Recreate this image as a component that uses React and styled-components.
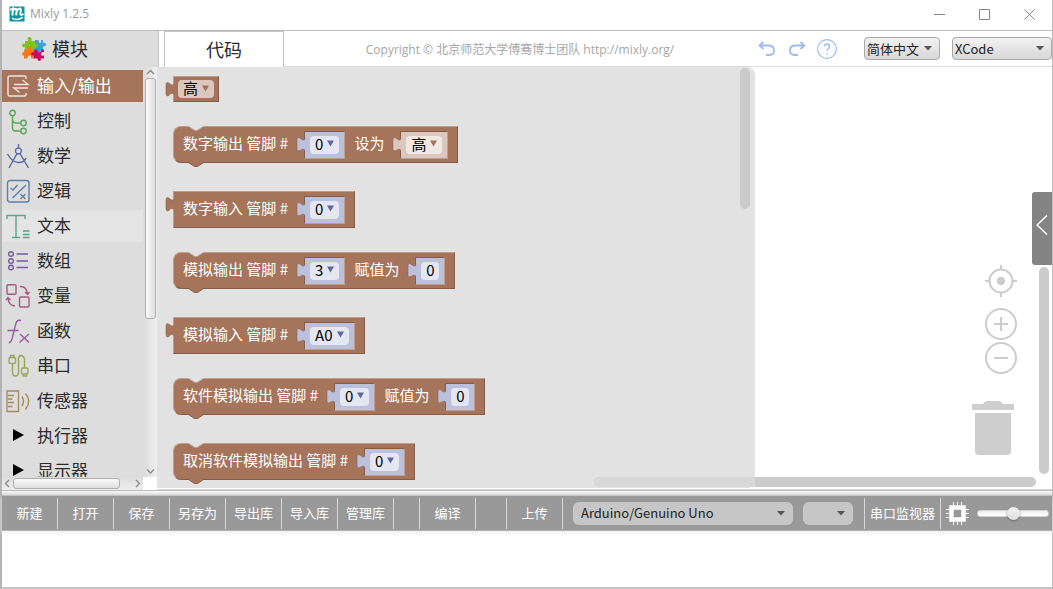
import React from "react";
import styled, { createGlobalStyle, css } from "styled-components";

const cjk = '"Noto Sans CJK SC", sans-serif';
const ui = '"Open Sans", "Noto Sans CJK SC", sans-serif';

const Global = createGlobalStyle`
  * { box-sizing: border-box; }
  body { margin: 0; background: #fff; font-family: ${cjk}; color: #2b2b2b; }
  button, input, select { font: inherit; color: inherit; margin: 0; padding: 0; border: 0; background: none; }
  svg { display: block; }
`;

const Window = styled.div`
  display: flex;
  flex-direction: column;
  height: 100vh;
  border-left: 2px solid #b4b4b4;
  border-right: 1px solid #bcbcbc;
  border-bottom: 2px solid #c4c4c4;
`;

/* ---------- title bar and header ---------- */

const TitleBar = styled.header`
  display: flex;
  align-items: center;
  flex: 0 0 31px;
  padding: 0 0 2px 7px;
  gap: 5px;
  border-bottom: 1px solid #bdbdbd;
`;

const Title = styled.span`
  flex: 1;
  font: 12px/28px ${ui};
  color: #999;
`;

const WindowButton = styled.button`
  display: flex;
  align-items: center;
  justify-content: center;
  width: 45px;
  height: 28px;
  margin-left: -5px;
`;

const Header = styled.div`
  display: flex;
  align-items: stretch;
  flex: 0 0 36px;
`;

const HeaderTab = styled.button`
  display: flex;
  align-items: center;
  justify-content: ${(p) => (p.$code ? "center" : "flex-start")};
  gap: 6px;
  flex: 0 0 ${(p) => (p.$code ? 120 : 157)}px;
  margin-right: ${(p) => (p.$code ? 0 : 5)}px;
  padding-left: ${(p) => (p.$code ? 0 : 20)}px;
  border: solid #c4c4c4;
  border-width: ${(p) => (p.$code ? "1px 1px 0" : "0 1px 0 0")};
  background: ${(p) => (p.$code ? "#fff" : "#ddd")};
  font-size: 18px;
  line-height: 28px;
`;

const Label = styled.span`
  padding-bottom: 2px;
`;

const HeaderTools = styled.div`
  display: flex;
  align-items: center;
  flex: 1;
  border-bottom: 1px solid #ddd;
`;

const Copyright = styled.p`
  flex: 1;
  margin: 0;
  padding: 2px 0 0 4px;
  text-align: center;
  white-space: nowrap;
  font: 12px/32px ${ui};
  color: #a6a6a6;
`;

const ToolButton = styled.button`
  display: flex;
  align-items: center;
  justify-content: center;
  width: 30px;
  height: 30px;
`;

const SelectBox = styled.div`
  position: relative;
  flex: 0 0 ${(p) => p.$w}px;
  margin-left: ${(p) => p.$gap}px;
  height: 23px;
  color: #222;

  select {
    display: block;
    appearance: none;
    width: 100%;
    height: 100%;
    padding-left: ${(p) => (p.$dark ? 8 : 2)}px;
    border: ${(p) => (p.$dark ? "0" : "1px solid #a9a9a9")};
    border-radius: ${(p) => (p.$dark ? 6 : 4)}px;
    background: ${(p) => (p.$dark ? "#c6c6c6" : "linear-gradient(#f2f2f2, #d8d8d8)")};
    font: 13px/20px ${cjk};
  }
  svg {
    position: absolute;
    right: 8px;
    top: 9px;
    pointer-events: none;
  }
`;

/* ---------- sidebar ---------- */

const Workspace = styled.main`
  display: flex;
  flex: 1;
  min-height: 0;
`;

const Sidebar = styled.aside`
  display: grid;
  grid-template: minmax(0, 1fr) 13px / 141px 14px;
  background: #ddd;
`;

const CategoryList = styled.nav`
  display: flex;
  flex-direction: column;
  gap: 3px;
  padding-top: 3px;
  overflow: hidden;
`;

const CategoryButton = styled.button`
  display: flex;
  align-items: center;
  flex: 0 0 32px;
  padding-left: 4px;
  gap: 7px;
  font-size: 17px;
  line-height: 28px;
  white-space: nowrap;
  ${(p) => p.$state === "selected" && css`background: #a5745b; color: #fff;`}
  ${(p) => p.$state === "hover" && css`background: #e4e4e4;`}
`;

const ScrollTrack = styled.div`
  display: flex;
  flex-direction: ${(p) => (p.$row ? "row" : "column")};
  align-items: center;
  gap: 1px;
  padding: ${(p) => (p.$row ? "0 1px" : "1px 0")};
  background: linear-gradient(${(p) => (p.$row ? "180deg" : "90deg")}, #dcdcdc, #efefef);
`;

const ScrollThumb = styled.div`
  flex: 0 0 ${(p) => p.$size};
  margin-${(p) => (p.$row ? "right" : "bottom")}: auto;
  ${(p) => (p.$row ? "height" : "width")}: 11px;
  border: 1px solid #b0b0b0;
  border-radius: 3px;
  background: linear-gradient(${(p) => (p.$row ? "180deg" : "90deg")}, #fafafa, #dedede);
`;

const Corner = styled.div`
  background: #fff;
`;

/* ---------- block canvas ---------- */

const Canvas = styled.section`
  position: relative;
  display: flex;
  flex: 1;
  min-width: 0;
  padding-bottom: 1px;
  border-bottom: 1px solid #d4d4d4;
`;

const Flyout = styled.div`
  display: flex;
  flex: 0 0 calc(67% - 2px);
  justify-content: space-between;
  padding: 1px 5px 0 16px;
  border-radius: 0 8px 8px 0;
  background: #e2e2e2;
  overflow: hidden;
`;

const BlockList = styled.div`
  display: flex;
  flex-direction: column;
  align-items: flex-start;
  gap: 24px;
  padding-top: 8px;
`;

const Block = styled.div`
  position: relative;
  display: flex;
  align-items: center;
  flex: 0 0 ${(p) => (p.$small ? 26 : 37)}px;
  margin-bottom: ${(p) => (p.$statement ? 4 : 0)}px;
  padding: 0 ${(p) => (p.$small ? 4 : 9)}px;
  border: 1px solid;
  border-color: #c09e8c #845d49 #845d49 #c09e8c;
  border-radius: ${(p) => (p.$statement ? "8px 0 0 8px" : "0")};
  background: #a5745b;
`;

const BlockText = styled.span`
  padding-bottom: 3px;
  font-size: 15px;
  line-height: 24px;
  color: #fff;
  white-space: nowrap;

  ${Block} > div + & {
    margin-left: 9px;
  }
`;

const Socket = styled.div`
  position: relative;
  display: flex;
  align-items: center;
  height: 28px;
  margin-left: 16px;
  padding: 0 5px;
  border: 1px solid;
  border-color: #845d49 #c09e8c #c09e8c #845d49;
  background: ${(p) => (p.$brown ? "#dbc7bd" : "#bbc1dc")};
`;

const fieldStyle = css`
  height: 18px;
  padding-bottom: 2px;
  border-radius: 4px;
  font-size: 15px;
  line-height: 16px;
  color: #000;
`;

const FieldButton = styled.button`
  display: flex;
  align-items: center;
  gap: 4px;
  padding: 0 5px;
  background: ${(p) => p.$bg};
  ${fieldStyle}
`;

const FieldInput = styled.input`
  width: 18px;
  text-align: center;
  background: #e4e6f1;
  ${fieldStyle}
`;

const Tab = styled.svg`
  position: absolute;
  left: -9px;
  top: 4px;
`;

const Notch = styled.svg`
  position: absolute;
  left: 14px;
  ${(p) => (p.$bottom ? "bottom: -5px;" : "top: -1px;")}
`;

const Bar = styled.div`
  border-radius: 5px;
  background: #cbcbcb;
`;

const FlyoutBar = styled(Bar)`
  width: 10px;
  height: 141px;
`;

const CanvasBarV = styled(Bar)`
  position: absolute;
  right: 3px;
  top: 200px;
  bottom: 15px;
  width: 10px;
`;

const CanvasBarH = styled(Bar)`
  position: absolute;
  right: 16px;
  bottom: 2px;
  width: 442px;
  height: 10px;
`;

const FlyoutLayer = styled(Bar)`
  position: absolute;
  left: 437px;
  right: calc(33% + 2px);
  bottom: 2px;
  height: 10px;
  border-radius: 5px 0 0 5px;
  background: #d8d8d8;
`;

const CanvasControls = styled.div`
  position: absolute;
  right: 35px;
  bottom: 34px;
  display: flex;
  flex-direction: column;
  align-items: flex-end;
`;

const ControlButton = styled.button`
  margin-bottom: ${(p) => p.$after}px;
`;

const Trash = styled.svg`
  margin-right: 3px;
`;

const PanelHandle = styled.button`
  position: absolute;
  right: 0;
  top: 125px;
  display: flex;
  align-items: center;
  justify-content: center;
  width: 20px;
  height: 73px;
  padding-bottom: 8px;
  border-radius: 3px 0 0 3px;
  background: #848484;
`;

/* ---------- bottom ---------- */

const Splitter = styled.div`
  flex: 0 0 6px;
  border: solid #bcbcbc;
  border-width: 1px 0;
  background: linear-gradient(#fafafa, #dadada);
`;

const Toolbar = styled.div`
  display: flex;
  align-items: center;
  flex: 0 0 35px;
  padding-right: 3px;
  border-bottom: 1px solid #b4b4b4;
  background: #999;
  box-shadow: 0 2px 4px #eee;
`;

const cell = css`
  flex: 0 0 ${(p) => p.$w}px;
  height: 31px;
  border-right: 1px solid #d8d8d8;
`;

const ToolbarButton = styled.button`
  ${cell}
  font-size: 13px;
  line-height: 28px;
  color: #fff;
  white-space: nowrap;
`;

const ToolbarGap = styled.div`
  ${cell}
`;

const MonitorButton = styled(ToolbarButton)`
  margin-left: auto;
  border-left: 1px solid #d8d8d8;
`;

const ChipIcon = styled.svg`
  margin: 0 8px 0 5px;
`;

const Slider = styled.input`
  appearance: none;
  width: 72px;
  height: 16px;

  &::-webkit-slider-runnable-track {
    height: 7px;
    border-radius: 3px;
    border: 1px solid #d0d0d0;
    background: linear-gradient(#eee, #fff);
  }
  &::-webkit-slider-thumb {
    appearance: none;
    width: 13px;
    height: 13px;
    margin-top: -4px;
    border-radius: 50%;
    background: linear-gradient(#f4f4f4, #dcdcdc);
    box-shadow: 0 1px 2px #666;
  }
`;

const Output = styled.div`
  flex: 0 0 56px;
`;

/* ---------- drawings ---------- */

const Caret = () => (
  <svg width="8" height="5" aria-hidden="true">
    <path d="M0 0H8L4 4.5Z" fill="#555" />
  </svg>
);

const Chevron = ({ d }) => (
  <svg width="9" height="9" viewBox="0 0 9 9" fill="none" stroke="#888" strokeWidth="1.3" aria-hidden="true">
    <path d={d} />
  </svg>
);

const MixlyLogo = () => (
  <svg width="16" height="16" viewBox="0 0 16 16" fill="none" stroke="#fff" aria-hidden="true">
    <rect width="16" height="16" fill="#0d979e" />
    <path d="M1.2 3.8L3.8 2.4L3.5 9.500M3.600 4.600Q7.600 0.800 7.600 4.500L7.200 9.300M7.500 4.800Q11.800 0.800 11.800 4L11.300 8Q11.500 9.800 14.500 8" strokeWidth="2" />
    <path d="M3 12.200Q8 15.200 13.800 11.300" strokeWidth="1.400" />
  </svg>
);

const PuzzleLogo = () => (
  <svg width="24" height="24" viewBox="0 0 24 24" aria-hidden="true">
    <path fill="#7fc31c" d="M3 4H6Q4.600 0 7.500 0T9.500 4H13V7Q16 5.500 16 8.500T13 10.500V13H10Q10.500 10 8 10T6.500 13H3V10Q0 11 0 8.500T3 7Z" />
    <path fill="#3f9fdd" d="M13 3H16.500Q16.500 6 18 6T19 3H21V6Q24 5 24 7.500T21 9.500V13H18.500Q20 16 17.500 16T15.500 13H12.500V10.500Q15.500 11 15.500 8.500T13 7Z" />
    <path fill="#f47a16" d="M2 12.500H6Q5.500 9.500 8 9.500T10 12.500H12.500V15Q9.500 14.500 9.500 17T12.500 18.500V21.500H9Q9.500 18.500 7.500 18.500T5.500 21.500H2V18.500Q0 19 0 17T2 15Z" />
    <path fill="#cb0a63" d="M12.500 12.500H15.500Q15.500 15.500 17.500 15.500T19 12.500H22V15Q19 14.500 19 17T22 18.500V21.500H18.500Q19.500 24 17.500 24T15.500 21.500H12V18.500Q9 19.500 9 17T12 15Z" />
  </svg>
);

const icons = {
  io: (
    <path d="M20 5V3.500Q20 2 18.500 2H3.500Q2 2 2 3.500V20.500Q2 22 3.500 22H18.500Q20 22 20 20.500V19M8 10.500H22L16.500 6M22 14H8L13.500 18.500" />
  ),
  control: (
    <>
      <circle cx="6.500" cy="4" r="2.700" /><circle cx="17.500" cy="14" r="2.700" /><circle cx="17.500" cy="22" r="2.700" />
      <path d="M6.500 7V19Q6.500 22 9.500 22H14.500M6.500 10Q6.500 14 10.500 14H14.500" />
    </>
  ),
  math: (
    <path d="M12.500 0V4M12.500 4A3 3 0 1 1 12.400 4M11 9.500L3 24M14 9.500L22.500 24M1.500 10Q6 18 12 18.500T20 14" />
  ),
  logic: (
    <>
      <rect x="1.500" y="1.500" width="21.500" height="21.500" rx="2.500" />
      <path d="M4.500 9L7 11L11.500 6M6.500 19L20 6M14.500 15L19.500 20M19.500 15L14.500 20" />
    </>
  ),
  text: (
    <path d="M1 5V1.500H19V5M10 1.500V23.500M6 23.500H14M17 17H23.500M17 20.500H23.500M17 23.500H23.500" />
  ),
  list: (
    <>
      <circle cx="5" cy="5" r="2.300" /><circle cx="5" cy="12" r="2.300" /><circle cx="5" cy="18.500" r="2.300" />
      <path d="M10.500 5H22M10.500 12H22M10.500 18.500H22" />
    </>
  ),
  vars: (
    <>
      <rect x="1" y="0.700" width="9" height="9.500" rx="1" /><rect x="13.500" y="13" width="9.500" height="10" rx="1" />
      <path d="M14 2.500Q20.500 2 21.500 10M19 8L21.500 10.500L23.500 8M2 14Q2.500 21.500 9 22M0 16L2 13.500L4.500 16" />
    </>
  ),
  func: (
    <path d="M15 1.500Q10.500 0 9.500 6L6 20Q5 23 3 24M1.500 11.500H12.500M14 15L23 23.500M23 15L13.500 23.500" />
  ),
  serial: (
    <>
      <rect x="3" y="3.500" width="6.500" height="6" rx="1.500" /><path d="M4.500 3.500V1.500H8V3.500M6.500 9.500V18Q6.500 22 9.500 22T12.500 18V5Q12.500 1.500 15 1.500T18.500 5V14" />
      <rect x="15.500" y="14" width="6.500" height="6" rx="1.500" /><path d="M17 20V22H20.500V20" />
    </>
  ),
  sensor: (
    <path d="M1 2H12.500V22.500H1ZM2 6.500H8M2 10H6.500M2 13.500H8M2 17.500H6.500M16 7.500Q19 12 16 17M19.500 4.500Q26 12 19.500 20.500" />
  ),
};

const categories = [
  ["输入/输出", "io", "#f2e6e0", "selected"],
  ["控制", "control", "#5ba65b"],
  ["数学", "math", "#5b67a5"],
  ["逻辑", "logic", "#5b80a5"],
  ["文本", "text", "#5ba58c", "hover"],
  ["数组", "list", "#745ba5"],
  ["变量", "vars", "#a55b80"],
  ["函数", "func", "#995ba5"],
  ["串口", "serial", "#99a55b"],
  ["传感器", "sensor", "#a58c5b"],
  ["执行器"],
  ["显示器"],
];

const CategoryIcon = ({ name, color }) => (
  <svg width="24" height="24" viewBox="0 0 24 24" fill="none" stroke={color} strokeWidth="1.4" overflow="visible" aria-hidden="true">
    {name ? icons[name] : <path d="M7 5L18 11L7 17Z" fill="#000" stroke="none" />}
  </svg>
);

/* ---------- block parts ---------- */

const OutputTab = ({ fill }) => (
  <Tab width="10" height="17" viewBox="0 0 10 17" aria-hidden="true">
    <path d="M10 2.500H9Q8 5.500 4.500 2.500Q1 0 1 4V12.500Q1 16.500 4.500 14Q8 11.500 9 14.500H10Z" fill={fill} />
    <path d="M9 3Q8 5.500 4.500 2.500Q1 0 1 4V12.500Q1 16.500 4.500 14" fill="none" stroke="#845d49" strokeOpacity="0.5" />
  </Tab>
);

const Dropdown = ({ value, tone = "blue" }) => {
  const tones = {
    blue: ["#e4e6f1", "#5b67a5"],
    pale: ["#f1e8e4", "#a5745b"],
    brown: ["#dbc7bd", "#a5745b"],
  };
  const [bg, arrow] = tones[tone];
  return (
    <FieldButton $bg={bg}>
      {value}
      <svg width="7" height="7" aria-hidden="true"><path d="M0 0.500H7L3.500 6.500Z" fill={arrow} /></svg>
    </FieldButton>
  );
};

const blocks = [
  { value: "高" },
  { statement: true, parts: ["数字输出 管脚 #", { pin: "0" }, "设为", { level: "高" }] },
  { parts: ["数字输入 管脚 #", { pin: "0" }] },
  { statement: true, parts: ["模拟输出 管脚 #", { pin: "3" }, "赋值为", { number: "0" }] },
  { parts: ["模拟输入 管脚 #", { pin: "A0" }] },
  { statement: true, parts: ["软件模拟输出 管脚 #", { pin: "0" }, "赋值为", { number: "0" }] },
  { statement: true, parts: ["取消软件模拟输出 管脚 #", { pin: "0" }] },
];

const BlockPart = ({ part, label }) => {
  if (typeof part === "string") return <BlockText>{part}</BlockText>;
  return (
    <Socket $brown={!!part.level}>
      <OutputTab fill={part.level ? "#dbc7bd" : "#bbc1dc"} />
      {part.pin && <Dropdown value={part.pin} />}
      {part.level && <Dropdown value={part.level} tone="pale" />}
      {part.number && <FieldInput defaultValue={part.number} aria-label={label} />}
    </Socket>
  );
};

const BlockView = ({ block }) => (
  <Block $statement={block.statement} $small={!!block.value}>
    {block.statement ? (
      <>
        <Notch width="16" height="5" aria-hidden="true">
          <path d="M0 0L6.500 4H9.500L16 0Z" fill="#e2e2e2" />
          <path d="M0.500 0.500L6.500 4.500H9.500L15.500 0.500" fill="none" stroke="#c09e8c" />
        </Notch>
        <Notch $bottom width="16" height="5" aria-hidden="true">
          <path d="M0 0L6.500 4.500H9.500L16 0Z" fill="#a5745b" />
          <path d="M0.500 0.500L6.500 4.500H9.500L15.500 0.500" fill="none" stroke="#845d49" />
        </Notch>
      </>
    ) : (
      <OutputTab fill="#a5745b" />
    )}
    {block.value && <Dropdown value={block.value} tone="brown" />}
    {block.parts?.map((part, i) => (
      <BlockPart key={i} part={part} label={block.parts[i - 1]} />
    ))}
  </Block>
);

const Select = ({ label, options, ...box }) => (
  <SelectBox {...box}>
    <select aria-label={label}>
      {options.map((o) => <option key={o}>{o}</option>)}
    </select>
    <Caret />
  </SelectBox>
);

const fileActions = ["新建", "打开", "保存", "另存为", "导出库", "导入库", "管理库"];

export default function App() {
  return (
    <>
      <Global />
      <Window>
        <TitleBar>
          <MixlyLogo />
          <Title>Mixly 1.2.5</Title>
          <WindowButton aria-label="最小化">
            <svg width="11" height="11" stroke="#888"><path d="M0 5.500H11" /></svg>
          </WindowButton>
          <WindowButton aria-label="最大化">
            <svg width="11" height="11" stroke="#888" fill="none"><path d="M0.500 0.500H10.500V10.500H0.500Z" /></svg>
          </WindowButton>
          <WindowButton aria-label="关闭">
            <svg width="11" height="11" stroke="#888"><path d="M0.500 0.500L10.500 10.500M10.500 0.500L0.500 10.500" /></svg>
          </WindowButton>
        </TitleBar>

        <Header>
          <HeaderTab><PuzzleLogo /><Label>模块</Label></HeaderTab>
          <HeaderTab $code><Label>代码</Label></HeaderTab>
          <HeaderTools>
            <Copyright>Copyright © 北京师范大学傅骞博士团队 http://mixly.org/</Copyright>
            <ToolButton aria-label="撤销">
              <svg width="18" height="16" viewBox="0 0 18 16" fill="none" stroke="#9dbcf0" strokeWidth="1.8">
                <path d="M5.500 1L1.500 4.500L5.500 8M1.500 4.500H11.500Q16 5 16 9.500T11.500 14H8" />
              </svg>
            </ToolButton>
            <ToolButton aria-label="重做">
              <svg width="18" height="16" viewBox="0 0 18 16" fill="none" stroke="#9dbcf0" strokeWidth="1.8">
                <path d="M12.500 1L16.500 4.500L12.500 8M16.500 4.500H6.500Q2 5 2 9.500T6.500 14H10" />
              </svg>
            </ToolButton>
            <ToolButton aria-label="帮助">
              <svg width="20" height="20" viewBox="0 0 20 20" fill="none" stroke="#9dbcf0">
                <circle cx="10" cy="10" r="9.400" strokeWidth="1.200" />
                <path d="M7.500 7.500Q7.500 5 10 5T12.500 7.500Q12.500 9 11 10T10 12.500M10 14V15.500" strokeWidth="1.400" />
              </svg>
            </ToolButton>
            <Select $w={76} $gap={22} label="语言" options={["简体中文"]} />
            <Select $w={100} $gap={12} label="皮肤" options={["XCode"]} />
          </HeaderTools>
        </Header>

        <Workspace>
          <Sidebar>
            <CategoryList>
              {categories.map(([name, icon, color, state]) => (
                <CategoryButton key={name} $state={state}>
                  <CategoryIcon name={icon} color={color} />
                  <Label>{name}</Label>
                </CategoryButton>
              ))}
            </CategoryList>
            <ScrollTrack>
              <Chevron d="M1 6L4.500 2.500L8 6" />
              <ScrollThumb $size="59%" />
              <Chevron d="M1 2.500L4.500 6L8 2.500" />
            </ScrollTrack>
            <ScrollTrack $row>
              <Chevron d="M6 1L2.500 4.500L6 8" />
              <ScrollThumb $row $size="107px" />
              <Chevron d="M3 1L6.500 4.500L3 8" />
            </ScrollTrack>
            <Corner />
          </Sidebar>

          <Canvas>
            <Flyout>
              <BlockList>
                {blocks.map((block, i) => <BlockView key={i} block={block} />)}
              </BlockList>
              <FlyoutBar />
            </Flyout>
            <CanvasBarV />
            <CanvasBarH />
            <FlyoutLayer />
            <CanvasControls>
              <ControlButton $after={11} aria-label="居中">
                <svg width="32" height="32" viewBox="0 0 32 32" fill="none" stroke="#ccc" strokeWidth="2">
                  <circle cx="16" cy="16" r="11.500" />
                  <circle cx="16" cy="16" r="4.200" fill="#ccc" stroke="none" />
                  <path d="M16 0V4M16 28V32M0 16H4M28 16H32" />
                </svg>
              </ControlButton>
              <ControlButton $after={2} aria-label="放大">
                <svg width="32" height="32" viewBox="0 0 32 32" fill="none" stroke="#ccc" strokeWidth="2">
                  <circle cx="16" cy="16" r="15" />
                  <path d="M16 9V23M9 16H23" />
                </svg>
              </ControlButton>
              <ControlButton $after={27} aria-label="缩小">
                <svg width="32" height="32" viewBox="0 0 32 32" fill="none" stroke="#ccc" strokeWidth="2">
                  <circle cx="16" cy="16" r="15" />
                  <path d="M9 16H23" />
                </svg>
              </ControlButton>
              <Trash width="42" height="54" viewBox="0 0 42 54" fill="#cecece" aria-hidden="true">
                <path d="M0 3H11Q13 0 15 0H27Q29 0 31 3H42V9H0ZM3 12H39V50Q39 54 35 54H7Q3 54 3 50Z" />
              </Trash>
            </CanvasControls>
            <PanelHandle aria-label="展开代码">
              <svg width="12" height="20" fill="none" stroke="#fff" strokeWidth="1.500"><path d="M11 0.500L1 10L11 19.500" /></svg>
            </PanelHandle>
          </Canvas>
        </Workspace>

        <Splitter />
        <Toolbar>
          {fileActions.map((a) => <ToolbarButton key={a} $w={56}>{a}</ToolbarButton>)}
          <ToolbarGap $w={26} />
          <ToolbarButton $w={56}>编译</ToolbarButton>
          <ToolbarGap $w={31} />
          <ToolbarButton $w={56}>上传</ToolbarButton>
          <Select $dark $w={220} $gap={10} label="开发板" options={["Arduino/Genuino Uno"]} />
          <Select $dark $w={50} $gap={10} label="端口" options={[""]} />
          <MonitorButton $w={77}>串口监视器</MonitorButton>
          <ChipIcon width="23" height="23" viewBox="0 0 23 23" aria-hidden="true">
            <path d="M5.500 5.500H17.500V17.500H5.500Z" fill="none" stroke="#fff" strokeWidth="4.500" />
            <path d="M7.500 0V3M11.500 0V3M15.500 0V3M7.500 20V23M11.500 20V23M15.500 20V23M0 7.500H3M0 11.500H3M0 15.500H3M20 7.500H23M20 11.500H23M20 15.500H23" stroke="#fff" />
          </ChipIcon>
          <Slider type="range" defaultValue="50" aria-label="缩放" />
        </Toolbar>
        <Output />
      </Window>
    </>
  );
}
